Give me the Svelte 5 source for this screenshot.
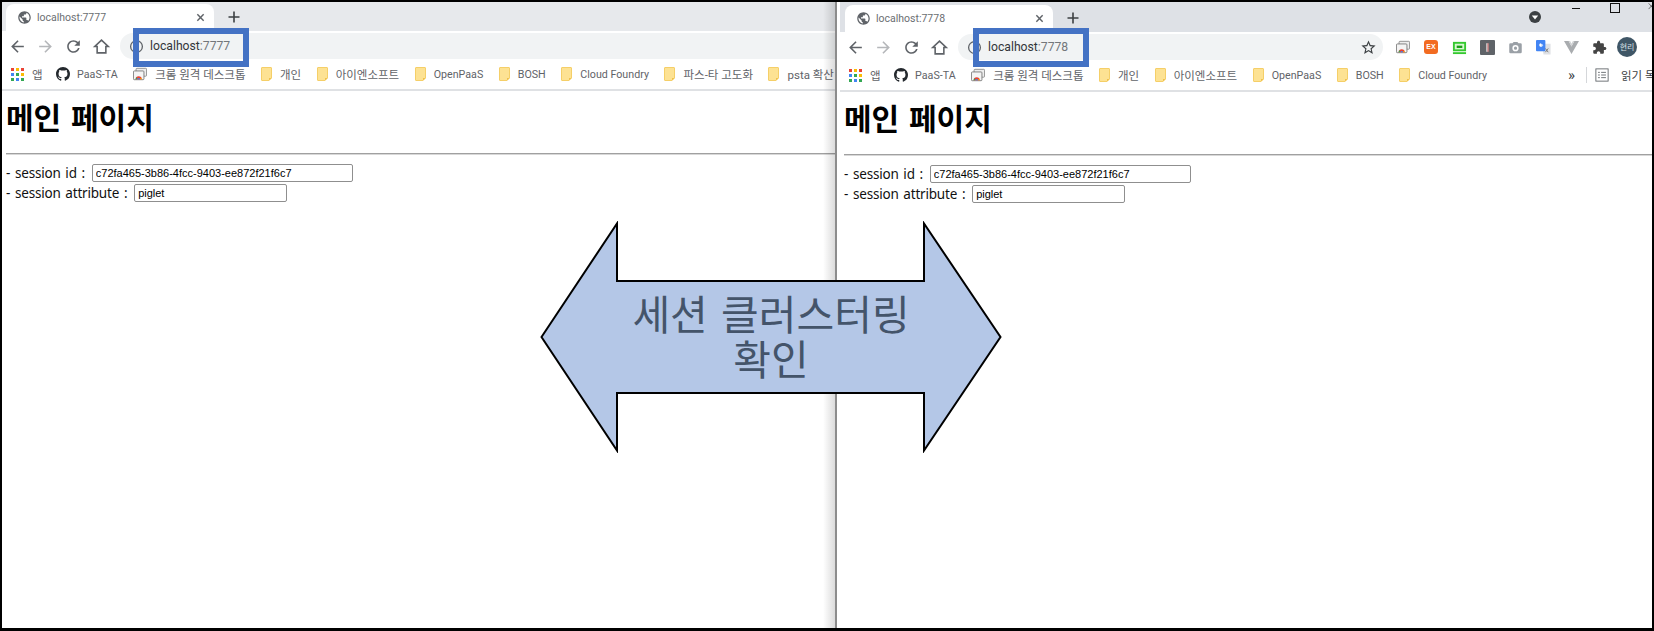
<script>
  const leftMarks = ['개인', '아이엔소프트', 'OpenPaaS', 'BOSH', 'Cloud Foundry', '파스-타 고도화', 'psta 확산'];
  const rightMarks = ['개인', '아이엔소프트', 'OpenPaaS', 'BOSH', 'Cloud Foundry'];
  const appColors = ['#ea4335', '#fbbc04', '#ea4335', '#4285f4', '#34a853', '#fbbc04', '#34a853', '#4285f4', '#34a853'];

  const windows = [
    { id: 'left', port: '7777', marks: leftMarks },
    { id: 'right', port: '7778', marks: rightMarks }
  ];

  // hangul labels run a touch larger than the latin ones in the bookmark bar
  const isKo = (name) => /[가-힣]/.test(name);
</script>

{#snippet remoteIcon()}
  <svg class="ico-remote" viewBox="0 0 16 16">
    <rect x="3.5" y="1.5" width="12" height="9" rx="1" fill="#eee" stroke="#888" />
    <rect x="0.5" y="4.5" width="12" height="10" rx="1" fill="#f4f4f4" stroke="#777" />
    <path d="M3 14a3.5 3.5 0 0 1 7 0z" fill="#ea4335" />
    <path d="M5 14a1.5 1.5 0 0 1 3 0z" fill="#4285f4" />
    <path d="M3 14h1.6v-1.6L3.4 12z" fill="#34a853" />
    <path d="M8.4 14H10a3.5 3.5 0 0 0-.5-1.8l-1.2.8z" fill="#fbbc04" />
  </svg>
{/snippet}

{#snippet folder()}
  <svg class="folder" viewBox="0 0 11 14">
    <path d="M1 .5h9a.5.5 0 0 1 .5.5v10l-2.5 2.5H1a.5.5 0 0 1-.5-.5V1A.5.5 0 0 1 1 .5z" fill="#fde293" stroke="#f5cf68" />
    <path d="M8 13.5V11h2.5z" fill="#f0c14b" />
  </svg>
{/snippet}

{#snippet browser(win)}
  <section class="window {win.id}">
    <div class="strip">
      <div class="tab">
        <svg class="globe" viewBox="0 0 24 24"><path d="M12 2C6.48 2 2 6.48 2 12s4.48 10 10 10 10-4.48 10-10S17.52 2 12 2zm-1 17.93c-3.95-.49-7-3.85-7-7.93 0-.62.08-1.21.21-1.79L9 15v1c0 1.1.9 2 2 2v1.93zm6.9-2.54c-.26-.81-1-1.39-1.9-1.39h-1v-3c0-.55-.45-1-1-1H8v-2h2c.55 0 1-.45 1-1V7h2c1.1 0 2-.9 2-2v-.41c2.93 1.19 5 4.06 5 7.41 0 2.08-.8 3.97-2.1 5.39z" /></svg>
        <span class="tab-title">localhost:{win.port}</span>
        <svg class="tab-x" viewBox="0 0 10 10"><path d="M1.5 1.5l7 7m0-7l-7 7" /></svg>
      </div>
      <svg class="plus" viewBox="0 0 12 12"><path d="M6 0.5v11M0.5 6h11" /></svg>
      {#if win.id === 'right'}
        <span class="spacer"></span>
        <svg class="media" viewBox="0 0 14 14"><circle cx="7" cy="7" r="6" fill="#3c4043" /><path d="M3.8 5.4h6.4L7 9.4z" fill="#fff" /></svg>
        <div class="controls">
          <span class="min"></span>
          <span class="max"></span>
          <svg class="close" viewBox="0 0 10 10"><path d="M1 0l8 9M9 0l-8 9" /></svg>
        </div>
      {/if}
    </div>

    <div class="toolbar">
      <button class="nav"><svg viewBox="0 0 24 24"><path d="M20 11H7.83l5.59-5.59L12 4l-8 8 8 8 1.41-1.41L7.83 13H20v-2z" /></svg></button>
      <button class="nav off"><svg viewBox="0 0 24 24"><path d="M12 4l-1.41 1.41L16.17 11H4v2h12.17l-5.58 5.59L12 20l8-8z" /></svg></button>
      <button class="nav"><svg viewBox="0 0 24 24"><path d="M17.65 6.35C16.2 4.9 14.21 4 12 4c-4.42 0-7.99 3.58-7.99 8s3.57 8 7.99 8c3.73 0 6.84-2.55 7.73-6h-2.08c-.82 2.33-3.04 4-5.65 4-3.31 0-6-2.69-6-6s2.69-6 6-6c1.66 0 3.14.69 4.22 1.78L13 11h7V4l-2.35 2.35z" /></svg></button>
      <button class="nav"><svg viewBox="0 0 24 24"><path class="home" d="M12 4L3.5 12H6.500v8h11v-8h3z" /></svg></button>
      <div class="omnibox">
        <svg class="info" viewBox="0 0 14 14"><circle cx="7" cy="7" r="5.500" /><path d="M7 6.500v3.500M7 4v1.200" /></svg>
        <span class="url">localhost<span class="port">:{win.port}</span></span>
        {#if win.id === 'right'}
          <svg class="star" viewBox="0 0 24 24"><path d="M22 9.24l-7.19-.62L12 2 9.19 8.63 2 9.24l5.46 4.73L5.820 21 12 17.27 18.180 21l-1.630-7.030L22 9.240zM12 15.400l-3.760 2.270 1-4.280-3.320-2.880 4.380-.380L12 6.100l1.710 4.040 4.380.380-3.320 2.880 1 4.280L12 15.400z" /></svg>
        {/if}
      </div>
      {#if win.id === 'right'}
        <div class="extensions">
          <span class="ext">{@render remoteIcon()}</span>
          <span class="ext"><span class="ex-badge">EX</span></span>
          <span class="ext"><svg class="ico16" viewBox="0 0 16 14"><rect x="2" y="2" width="12" height="8" fill="#d7f7d0" stroke="#35c92f" stroke-width="2" /><rect x="5" y="5" width="6" height="2.500" fill="#1a9e16" /><path d="M1 13h14" stroke="#35c92f" stroke-width="2" /></svg></span>
          <span class="ext"><svg class="ico16" viewBox="0 0 14 14"><rect width="14" height="14" rx="1" fill="#5f6368" /><rect x="6" y="3" width="1" height="8" fill="#fff" /><rect x="7" y="3" width="1" height="8" fill="#e88" /></svg></span>
          <span class="ext"><svg class="ico16" viewBox="0 0 24 24"><path fill="#9aa0a6" d="M9 3L7.170 5H4a2 2 0 0 0-2 2v12a2 2 0 0 0 2 2h16a2 2 0 0 0 2-2V7a2 2 0 0 0-2-2h-3.170L15 3zm3 15a5 5 0 1 1 0-10 5 5 0 0 1 0 10zm0-2.500a2.500 2.500 0 1 0 0-5 2.500 2.500 0 0 0 0 5z" /></svg></span>
          <span class="ext"><svg class="ico16" viewBox="0 0 16 16"><path d="M6 4h9.500v11.500H8z" fill="#dfe1e5" /><rect width="10" height="12" rx="1" fill="#4285f4" /><path d="M7 5H5v1.500h1a1.300 1.300 0 1 1-.5-2.400" fill="none" stroke="#fff" stroke-width="1.100" /><path d="M10 9l3 4m0-4l-3 4" stroke="#777" /></svg></span>
          <span class="ext"><svg class="ico16" viewBox="0 0 16 14"><path d="M0 0h5l3 6 3-6h5L8 14z" fill="#a9acaf" /><path d="M5 0l3 6 3-6h-1.500L8 3 6.500 0z" fill="#d0d2d4" /></svg></span>
          <span class="ext"><svg class="ico16 puzzle" viewBox="0 0 24 24"><path d="M20.500 11H19V7c0-1.100-.9-2-2-2h-4V3.500C13 2.120 11.880 1 10.500 1S8 2.120 8 3.500V5H4c-1.100 0-1.990.9-1.990 2v3.800H3.500c1.490 0 2.700 1.210 2.700 2.700s-1.210 2.700-2.700 2.700H2V20c0 1.100.9 2 2 2h3.800v-1.500c0-1.490 1.210-2.700 2.700-2.700 1.490 0 2.700 1.210 2.700 2.700V22H17c1.100 0 2-.9 2-2v-4h1.500c1.380 0 2.500-1.120 2.500-2.500S21.880 11 20.500 11z" /></svg></span>
          <span class="ext"><span class="avatar">현리</span></span>
        </div>
      {/if}
    </div>

    <div class="bookmarks">
      <div class="mark first">
        <span class="apps">
          {#each appColors as c}
            <i style="background: {c}"></i>
          {/each}
        </span>
        <span class="ko">앱</span>
      </div>
      <div class="mark">
        <svg class="github" viewBox="0 0 16 16"><path d="M8 0C3.580 0 0 3.580 0 8c0 3.540 2.290 6.530 5.470 7.590.4.070.55-.17.55-.38 0-.19-.01-.82-.01-1.490-2.010.37-2.530-.49-2.690-.94-.09-.23-.48-.94-.82-1.130-.28-.15-.68-.52-.01-.53.63-.01 1.080.58 1.230.82.72 1.210 1.870.87 2.330.66.070-.52.28-.87.51-1.070-1.780-.2-3.640-.89-3.640-3.950 0-.87.31-1.590.82-2.150-.08-.2-.36-1.020.08-2.120 0 0 .67-.21 2.200.82.64-.18 1.320-.27 2-.27.68 0 1.360.09 2 .27 1.530-1.040 2.200-.82 2.200-.82.44 1.100.16 1.920.08 2.120.51.56.82 1.270.82 2.150 0 3.070-1.870 3.750-3.650 3.950.29.25.54.73.54 1.480 0 1.070-.01 1.930-.01 2.200 0 .21.15.46.55.38A8.013 8.013 0 0 0 16 8c0-4.420-3.580-8-8-8z" /></svg>
        <span>PaaS-TA</span>
      </div>
      <div class="mark">
        {@render remoteIcon()}
        <span class="ko">크롬 원격 데스크톱</span>
      </div>
      {#each win.marks as name}
        <div class="mark">
          {@render folder()}
          <span class:ko={isKo(name)}>{name}</span>
        </div>
      {/each}
      {#if win.id === 'right'}
        <div class="mark-end">
          <span class="more">»</span>
          <span class="sep"></span>
          <svg class="reading" viewBox="0 0 16 16"><rect x="1" y="1" width="14" height="14" /><path d="M3.500 5h2M7 5h5.500M3.500 8h2M7 8h5.500M3.500 11h2M7 11h5.500" /></svg>
          <span class="read-label ko">읽기 목록</span>
        </div>
      {/if}
    </div>

    <main class="page">
      <h1>메인 페이지</h1>
      <hr />
      <div class="row">- session id : <input class="id" value="c72fa465-3b86-4fcc-9403-ee872f21f6c7" /></div>
      <div class="row">- session attribute : <input class="attr" value="piglet" /></div>
    </main>

    <div class="highlight"></div>
  </section>
{/snippet}

<div class="frame">
  {@render browser(windows[0])}
  <div class="divider"></div>
  {@render browser(windows[1])}

  <div class="arrow">
    <svg viewBox="0 0 462 232">
      <path d="M1.500 116L77 2.500V60H384V2.500L460.500 116L384 229.500V172H77v57.500z" />
    </svg>
    <p>세션 클러스터링<br />확인</p>
  </div>
</div>

<style>
  :global(body) {
    margin: 0;
    background: #fff;
  }

  .frame {
    position: relative;
    display: flex;
    width: 1654px;
    height: 631px;
    box-sizing: border-box;
    border: 2px solid #000;
    border-bottom-width: 3px;
    overflow: hidden;
    font-family: "Noto Sans", "Noto Sans CJK KR", sans-serif;
  }

  .window {
    position: relative;
    flex: none;
    overflow: hidden;
    background: #fff;
  }

  .window.left {
    width: 833px;
  }

  .window.left::after {
    content: '';
    position: absolute;
    top: 0;
    right: 0;
    bottom: 0;
    width: 12px;
    background: linear-gradient(to right, rgba(0, 0, 0, 0), rgba(0, 0, 0, 0.14));
  }

  .window.right {
    width: 814px;
    margin-left: 3px;
  }

  .divider {
    flex: none;
    width: 2px;
    background: #8c8c8c;
  }

  .strip {
    display: flex;
    align-items: flex-end;
    height: 29px;
    background: #e7e9ec;
    padding-left: 4px;
  }

  .right .strip {
    height: 30px;
    background: #dee1e6;
    margin-left: -3px;
    padding-left: 8px;
  }

  .tab {
    display: flex;
    align-items: center;
    width: 208px;
    height: 27px;
    box-sizing: border-box;
    padding: 0 9px 0 11px;
    background: #fff;
    border-radius: 8px 8px 0 0;
    flex: none;
  }

  .globe {
    width: 15px;
    height: 15px;
    fill: #5f6368;
    flex: none;
  }

  .tab-title {
    margin-left: 5px;
    font: 10.500px Roboto, sans-serif;
    color: #6b6e72;
    flex: 1;
  }

  .tab-x {
    width: 9px;
    height: 9px;
    stroke: #5f6368;
    stroke-width: 1.6;
    fill: none;
  }

  .plus {
    width: 12px;
    height: 12px;
    margin: 0 0 8px 14px;
    stroke: #3c4043;
    stroke-width: 1.6;
    fill: none;
  }

  .spacer {
    flex: 1;
  }

  .media {
    width: 14px;
    height: 14px;
    margin-bottom: 8px;
  }

  .controls {
    align-self: flex-start;
    display: flex;
    align-items: flex-start;
    width: 83px;
    margin-left: 29px;
    margin-top: 0;
    position: relative;
    height: 12px;
  }

  .min {
    width: 9px;
    height: 1px;
    background: #111;
    margin: 6px 0 0 1px;
  }

  .max {
    width: 8px;
    height: 8px;
    border: 1px solid #111;
    margin: 1px 0 0 30px;
  }

  .close {
    width: 7px;
    height: 7px;
    margin: 1px 0 0 28px;
    stroke: #333;
    fill: none;
  }

  .toolbar {
    display: flex;
    align-items: center;
    height: 28px;
    padding: 2px 0 0 1px;
    box-sizing: border-box;
  }

  .nav {
    flex: none;
    width: 28px;
    height: 24px;
    padding: 0;
    border: 0;
    background: none;
    display: flex;
    align-items: center;
    justify-content: center;
  }

  .nav svg {
    width: 19px;
    height: 19px;
    fill: #5f6368;
  }

  .nav.off svg {
    fill: #b5b7ba;
  }

  .nav .home {
    fill: none;
    stroke: #5f6368;
    stroke-width: 2;
  }

  .omnibox {
    flex: 1;
    display: flex;
    align-items: center;
    height: 26px;
    margin-left: 5px;
    padding-left: 9px;
    background: #f1f3f4;
    border-radius: 13px 0 0 13px;
  }

  .right .omnibox {
    flex: none;
    width: 425px;
    box-sizing: border-box;
    border-radius: 13px;
  }

  .info {
    width: 15px;
    height: 15px;
    fill: none;
    stroke: #5f6368;
    stroke-width: 1.200;
    flex: none;
  }

  .url {
    margin-left: 6px;
    font: 12.200px Roboto, sans-serif;
    color: #33363a;
  }

  .port {
    color: #73777b;
  }

  .star {
    width: 17px;
    height: 17px;
    fill: #3c4043;
    margin-left: auto;
    margin-right: 6px;
  }

  .extensions {
    display: flex;
    margin-left: 6px;
  }

  .ext {
    width: 28px;
    height: 22px;
    display: flex;
    align-items: center;
    justify-content: center;
  }

  .ico-remote {
    width: 14px;
    height: 14px;
    flex: none;
  }

  .ico16 {
    width: 15px;
    height: 15px;
  }

  .puzzle {
    fill: #444;
  }

  .ex-badge {
    width: 14px;
    height: 14px;
    border-radius: 3px;
    background: #f26b21;
    color: #fff;
    font: bold 7px/14px "Liberation Sans", sans-serif;
    text-align: center;
  }

  .avatar {
    width: 20px;
    height: 20px;
    border-radius: 50%;
    background: #3f5666;
    color: #d8e0e5;
    font: 8px/20px "Noto Sans CJK KR", sans-serif;
    text-align: center;
  }

  .bookmarks {
    display: flex;
    align-items: center;
    gap: 15.500px;
    height: 30px;
    padding-left: 9px;
    border-bottom: 2px solid #dfe1e4;
    font-family: Roboto, "Noto Sans CJK KR", sans-serif;
    font-size: 10.700px;
    color: #5f6368;
    white-space: nowrap;
  }

  .ko {
    font-size: 11.500px;
  }

  .mark {
    display: flex;
    align-items: center;
    gap: 8px;
    flex: none;
  }

  .mark.first {
    margin-right: -2px;
  }

  .apps {
    display: grid;
    grid-template-columns: repeat(3, 3px);
    gap: 2px;
  }

  .apps i {
    width: 3px;
    height: 3px;
  }

  .github {
    width: 14px;
    height: 14px;
    fill: #24292e;
    margin-right: -1px;
  }

  .folder {
    width: 11px;
    height: 14px;
    flex: none;
  }

  .mark-end {
    display: flex;
    align-items: center;
    margin-left: auto;
    margin-right: -60px;
    flex: none;
    width: 146px;
  }

  .more {
    font-size: 15px;
    width: 13px;
    color: #3c4043;
    line-height: 1;
  }

  .sep {
    width: 1px;
    height: 16px;
    background: #d5d7da;
    margin: 0 8px 0 5px;
  }

  .reading {
    width: 14px;
    height: 14px;
    fill: none;
    stroke: #5f6368;
    flex: none;
  }

  .read-label {
    margin-left: 12px;
    color: #3c4043;
  }

  .page {
    padding: 0 0 0 4px;
    color: #111;
  }

  h1 {
    margin: 0;
    padding-top: 5px;
    height: 57px;
    font-family: "Noto Sans CJK KR", sans-serif;
    font-size: 30px;
    line-height: 40px;
    font-weight: 700;
    word-spacing: 3px;
    color: #000;
  }

  hr {
    margin: 0 0 8px;
    border: 0;
    border-top: 1px solid #a0a0a0;
    border-bottom: 1px solid #d8d8d8;
    box-sizing: content-box;
    height: 0;
  }

  .row {
    display: flex;
    align-items: center;
    gap: 2px;
    height: 20px;
    font-size: 13.500px;
    letter-spacing: -0.200px;
    word-spacing: 1.500px;
    white-space: pre;
  }

  input {
    height: 18px;
    box-sizing: border-box;
    padding: 1px 3px;
    border: 1px solid #8f8f8f;
    border-radius: 2px;
    font: 11px "Liberation Sans", sans-serif;
    letter-spacing: 0;
    word-spacing: 0;
    color: #000;
    background: #fff;
  }

  .id {
    width: 261px;
  }

  .attr {
    width: 153px;
  }

  .highlight {
    position: absolute;
    left: 131px;
    top: 26px;
    width: 116px;
    height: 39px;
    box-sizing: border-box;
    border: 6px solid #4472c4;
  }

  .right .highlight {
    left: 133px;
  }

  .arrow {
    position: absolute;
    left: 538px;
    top: 219px;
    width: 462px;
    height: 232px;
    display: flex;
    align-items: center;
    justify-content: center;
  }

  .arrow svg {
    position: absolute;
    inset: 0;
    width: 100%;
    height: 100%;
  }

  .arrow path {
    fill: #b4c7e7;
    stroke: #000;
    stroke-width: 2;
  }

  .arrow p {
    position: relative;
    margin: 0 0 4px;
    font-family: "Noto Sans CJK KR", sans-serif;
    font-size: 41px;
    line-height: 45px;
    word-spacing: 4px;
    text-align: center;
    color: #44546a;
  }
</style>
